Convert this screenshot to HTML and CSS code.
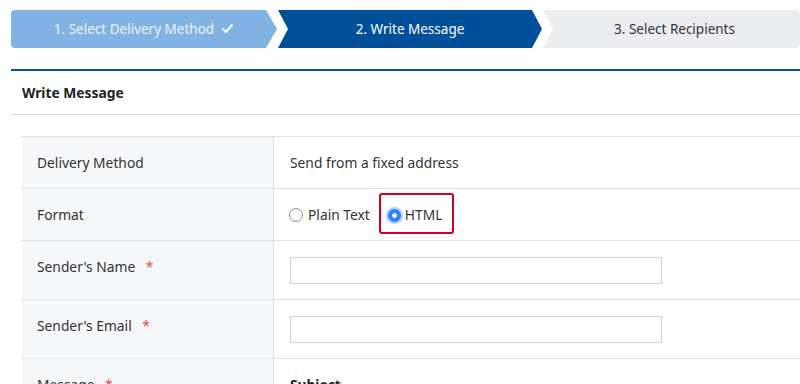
FILE: index.html
```html
<!DOCTYPE html>
<html lang="en">
<head>
<meta charset="utf-8">
<title>Write Message</title>
<link rel="stylesheet" href="styles.css">
</head>
<body>
<div class="page">
  <ol class="stepper">
    <li class="step step-done">1. Select Delivery Method
      <svg class="check" width="13" height="11" viewBox="0 0 13 11"><path d="M1.5 5.5 L5 9 L11.5 1.5" fill="none" stroke="#ffffff" stroke-width="2"/></svg>
    </li>
    <li class="step step-current">2. Write Message</li>
    <li class="step step-next">3. Select Recipients</li>
  </ol>

  <section class="panel">
    <h2 class="panel-title">Write Message</h2>
    <div class="form-table">
      <div class="row">
        <div class="label">Delivery Method</div>
        <div class="value value-text">Send from a fixed address</div>
      </div>
      <div class="row">
        <div class="label">Format</div>
        <div class="value value-text">
          <div class="radios">
            <label class="radio"><span class="dot"></span>Plain Text</label>
            <label class="radio radio-highlight"><span class="dot dot-on"></span>HTML<span class="annot"></span></label>
          </div>
        </div>
      </div>
      <div class="row">
        <div class="label">Sender's Name <span class="req">*</span></div>
        <div class="value"><input class="field" type="text"></div>
      </div>
      <div class="row">
        <div class="label">Sender's Email <span class="req">*</span></div>
        <div class="value"><input class="field" type="text"></div>
      </div>
      <div class="row">
        <div class="label">Message <span class="req">*</span></div>
        <div class="value value-text">
          <div class="sub">Subject</div>
          <input class="field" type="text">
        </div>
      </div>
    </div>
  </section>
</div>
</body>
</html>
```

FILE: styles.css
```css
html { overflow: hidden; }
body {
  margin: 0;
  font-family: "Noto Sans", "DejaVu Sans", sans-serif;
  color: #333333;
  background: #ffffff;
}
.page {
  padding: 10px 0 0 11px;
}
.stepper {
  list-style: none;
  margin: 0;
  padding: 0;
  display: flex;
  height: 38px;
  font-size: 13.5px;
}
.step {
  display: flex;
  align-items: center;
  justify-content: center;
  height: 38px;
}
.step-done {
  width: 266px;
  background: #80b2e4;
  color: #eef4fb;
  border-radius: 4px 0 0 4px;
  clip-path: polygon(0 0, calc(100% - 11px) 0, 100% 50%, calc(100% - 11px) 100%, 0 100%);
}
.check { margin-left: 7px; margin-top: -2px; }
.step-current {
  width: 264px;
  margin-left: 1px;
  background: #004f9b;
  color: #ffffff;
  clip-path: polygon(0 0, calc(100% - 10px) 0, 100% 50%, calc(100% - 10px) 100%, 0 100%, 10px 50%);
}
.step-next {
  flex: 1;
  margin-left: 1px;
  background: #ecedf0;
  color: #333333;
  border-radius: 0 4px 4px 0;
  clip-path: polygon(0 0, 100% 0, 100% 100%, 0 100%, 10px 50%);
  padding-left: 6px;
}
.panel {
  margin-top: 21px;
  border-top: 2px solid #00509e;
}
.panel-title {
  margin: 0;
  height: 43px;
  display: flex;
  align-items: center;
  padding-left: 11px;
  font-size: 13.8px;
  font-weight: bold;
  color: #222222;
  border-bottom: 1px solid #dcdcdc;
}
.form-table {
  margin: 21px 0 0 11px;
  border-top: 1px solid #e2e2e2;
  font-size: 13.8px;
}
.row {
  display: grid;
  grid-template-columns: 252px 1fr;
  border-bottom: 1px solid #e2e2e2;
}
.label {
  background: #f6f7f9;
  border-right: 1px solid #e2e2e2;
  padding: 15px 15px;
  line-height: 21px;
}
.req {
  color: #e8474f;
  margin-left: 7px;
}
.value {
  padding: 16px 16px 15px;
}
.value-text {
  padding: 15px 16px;
  line-height: 21px;
}
.radios {
  display: flex;
  align-items: center;
}
.radio {
  display: flex;
  align-items: center;
  position: relative;
}
.dot {
  width: 12px;
  height: 12px;
  border: 1px solid #8a8a8a;
  border-radius: 50%;
  background: #ffffff;
  margin: 1px 5px 0 -1px;
  box-sizing: content-box;
}
.radio-highlight { margin-left: 18px; }
.dot-on {
  width: 13px;
  height: 13px;
  border: 0;
  background: radial-gradient(circle, #ffffff 0 2px, #2f80f5 2.6px);
  box-shadow: 0 0 1px 2px rgba(70, 140, 245, 0.45);
  margin: 1px 4px 0 0;
}
.annot {
  position: absolute;
  left: -9px;
  right: -12px;
  top: -11px;
  bottom: -9px;
  border: 2px solid #d3001c;
  border-radius: 3px;
}
.field {
  display: block;
  box-sizing: border-box;
  width: 372px;
  height: 27px;
  margin: 0;
  border: 1px solid #d2d2d2;
  border-radius: 0;
  background: #ffffff;
}
.sub {
  font-weight: bold;
  color: #222222;
  margin-bottom: 6px;
}
```
